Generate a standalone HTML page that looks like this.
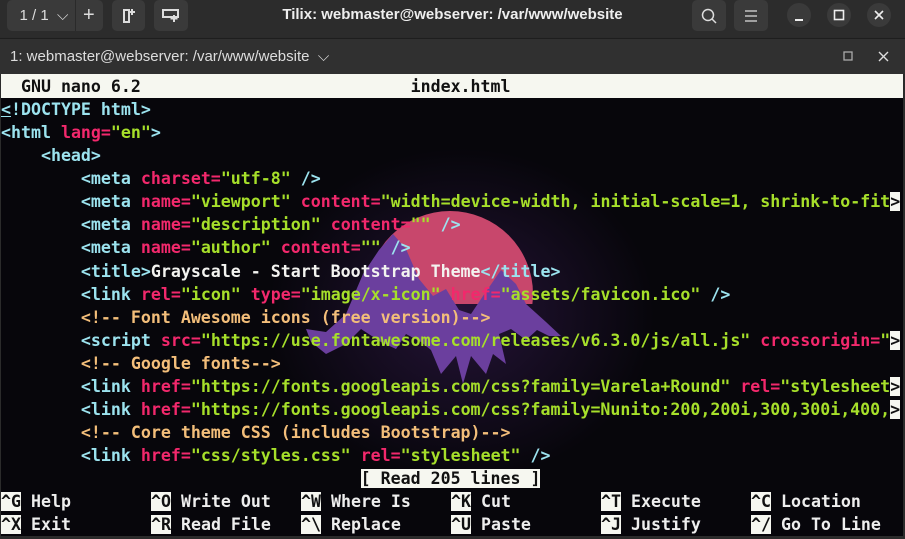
<!DOCTYPE html>
<html><head><style>
body{margin:0;width:905px;height:539px;background:#2b2b2b;overflow:hidden;font-family:"Liberation Sans",sans-serif;position:relative}
.tb{position:absolute;left:0;top:0;width:905px;height:37px;background:#2c2c2c}
.btn{position:absolute;top:0;height:31px;background:#3a3a3a;border-radius:5px;color:#ddd;font-size:15px;line-height:31px;text-align:center}
.title{position:absolute;left:0;width:905px;top:6px;text-align:center;color:#eee;font-weight:bold;font-size:15px}
.circ{position:absolute;top:3px;width:24px;height:24px;border-radius:50%;background:#3a3a3a}
.tab{position:absolute;left:0;top:38px;width:905px;height:35px;background:#303030;border-top:1px solid #1e1e1e}
.term{position:absolute;left:1px;top:74px;width:902px;height:462px;background:#07060b;overflow:hidden}
pre{margin:0;position:absolute;left:0;top:1px;font-family:"DejaVu Sans Mono","Liberation Mono",monospace;font-weight:bold;font-size:16.6px;line-height:23.07px;color:#eee}
.t{color:#9ce3ef}.a{color:#f2286c}.s{color:#a6df2a}.c{color:#f3be7a}.w{color:#f3f3f0}
.h{background:#f6f7f0;color:#111}
.k{display:inline-block;width:150px;white-space:pre}
</style></head><body>
<div class="tb">
 <div class="btn" style="left:7px;width:96px;text-align:left">&nbsp;&nbsp;&nbsp;1 / 1 &nbsp;⌵<span style="position:absolute;left:68px;top:0;width:1px;height:31px;background:#2a2a2a"></span><span style="position:absolute;left:76px;font-size:20px">+</span></div>
 <div class="btn" style="left:112px;width:33px"><svg width="14" height="16" viewBox="0 0 14 16" style="margin-top:8px"><path d="M2 2h5v12H2z" fill="none" stroke="#ddd" stroke-width="2"/><path d="M10 1v6M7 4h6" stroke="#ddd" stroke-width="2"/></svg></div>
 <div class="btn" style="left:154px;width:34px"><svg width="18" height="14" viewBox="0 0 18 14" style="margin-top:9px"><path d="M1 1h15v7H1z" fill="none" stroke="#ddd" stroke-width="2"/><path d="M12 6v7M8.5 9.5h7" stroke="#ddd" stroke-width="2"/></svg></div>
 <div class="title">Tilix: webmaster@webserver: /var/www/website</div>
 <div class="btn" style="left:692px;width:34px"><svg width="16" height="16" viewBox="0 0 16 16" style="margin-top:8px"><circle cx="7" cy="7" r="5.5" fill="none" stroke="#ddd" stroke-width="1.5"/><path d="M11 11l4 4" stroke="#ddd" stroke-width="1.5"/></svg></div>
 <div class="btn" style="left:734px;width:34px"><svg width="14" height="12" viewBox="0 0 14 12" style="margin-top:10px"><path d="M1 1h12M1 6h12M1 11h12" stroke="#ddd" stroke-width="1.3"/></svg></div>
 <div class="circ" style="left:787px"><svg width="24" height="24"><path d="M8 17h8" stroke="#eee" stroke-width="2"/></svg></div>
 <div class="circ" style="left:827px"><svg width="24" height="24"><rect x="7.5" y="7.5" width="9" height="9" fill="none" stroke="#eee" stroke-width="1.6"/></svg></div>
 <div class="circ" style="left:867px"><svg width="24" height="24"><path d="M8 8l8 8M16 8l-8 8" stroke="#eee" stroke-width="1.6"/></svg></div>
</div>
<div class="tab">
 <div style="position:absolute;left:10px;top:9px;color:#ddd;font-size:15px">1: webmaster@webserver: /var/www/website &nbsp;⌵</div>
 <svg style="position:absolute;left:843px;top:12px" width="12" height="12"><rect x="1" y="1" width="8" height="8" fill="none" stroke="#aaa" stroke-width="1.3"/></svg>
 <svg style="position:absolute;left:878px;top:12px" width="12" height="12"><path d="M1 1l9 9M10 1l-9 9" stroke="#ddd" stroke-width="1.4"/></svg>
</div>
<div class="term">
 <div style="position:absolute;left:250px;top:60px;width:420px;height:360px;background:radial-gradient(ellipse at center,rgba(60,30,90,0.55),rgba(7,6,11,0) 65%)"></div>
 <svg style="position:absolute;left:0;top:0" width="902" height="462">
  <defs><clipPath id="cp"><rect x="0" y="0" width="902" height="230"/></clipPath></defs>
  <circle cx="449" cy="220" r="83" fill="#c8476c" clip-path="url(#cp)"/>
  <path d="M305 255 L325 258 L345 240 L362 200 L378 176 L392 160 L405 175 L418 205 L432 222 L445 215 L458 236 L470 240 L482 222 L500 196 L515 210 L525 230 L545 248 L560 262 L548 262 L536 256 L525 266 L510 255 L498 260 L505 290 L492 280 L485 300 L470 282 L462 310 L455 282 L440 300 L430 276 L420 268 L405 260 L395 275 L380 268 L360 255 L345 270 L325 280 L310 268 Z" fill="#6b3f9e"/>
 </svg>
 <div class="h" style="position:absolute;left:0;top:0;width:902px;height:24px"></div>
<pre><span class="h">  GNU nano 6.2                           index.html                                        </span>
<span class="t" style="text-decoration:underline">&lt;</span><span class="t">!DOCTYPE html&gt;</span>
<span class="t">&lt;html </span><span class="a">lang=</span><span class="s">"en"</span><span class="t">&gt;</span>
<span class="t">    &lt;head&gt;</span>
<span class="t">        &lt;meta </span><span class="a">charset=</span><span class="s">"utf-8"</span><span class="t"> /&gt;</span>
<span class="t">        &lt;meta </span><span class="a">name=</span><span class="s">"viewport"</span> <span class="a">content=</span><span class="s">"width=device-width, initial-scale=1, shrink-to-fit</span><span class="h">&gt;</span>
<span class="t">        &lt;meta </span><span class="a">name=</span><span class="s">"description"</span> <span class="a">content=</span><span class="s">""</span><span class="t"> /&gt;</span>
<span class="t">        &lt;meta </span><span class="a">name=</span><span class="s">"author"</span> <span class="a">content=</span><span class="s">""</span><span class="t"> /&gt;</span>
<span class="t">        &lt;title&gt;</span><span class="w">Grayscale - Start Bootstrap Theme</span><span class="t">&lt;/title&gt;</span>
<span class="t">        &lt;link </span><span class="a">rel=</span><span class="s">"icon"</span> <span class="a">type=</span><span class="s">"image/x-icon"</span> <span class="a">href=</span><span class="s">"assets/favicon.ico"</span><span class="t"> /&gt;</span>
<span class="c">        &lt;!-- Font Awesome icons (free version)--&gt;</span>
<span class="t">        &lt;script </span><span class="a">src=</span><span class="s">"https://use.fontawesome.com/releases/v6.3.0/js/all.js"</span> <span class="a">crossorigin=</span><span class="s">"</span><span class="h">&gt;</span>
<span class="c">        &lt;!-- Google fonts--&gt;</span>
<span class="t">        &lt;link </span><span class="a">href=</span><span class="s">"https://fonts.googleapis.com/css?family=Varela+Round"</span> <span class="a">rel=</span><span class="s">"stylesheet</span><span class="h">&gt;</span>
<span class="t">        &lt;link </span><span class="a">href=</span><span class="s">"https://fonts.googleapis.com/css?family=Nunito:200,200i,300,300i,400,</span><span class="h">&gt;</span>
<span class="c">        &lt;!-- Core theme CSS (includes Bootstrap)--&gt;</span>
<span class="t">        &lt;link </span><span class="a">href=</span><span class="s">"css/styles.css"</span> <span class="a">rel=</span><span class="s">"stylesheet"</span><span class="t"> /&gt;</span>
                                    <span class="h">[ Read 205 lines ]</span>
<span class="k"><span class="h">^G</span> Help</span><span class="k"><span class="h">^O</span> Write Out</span><span class="k"><span class="h">^W</span> Where Is</span><span class="k"><span class="h">^K</span> Cut</span><span class="k"><span class="h">^T</span> Execute</span><span class="k"><span class="h">^C</span> Location</span>
<span class="k"><span class="h">^X</span> Exit</span><span class="k"><span class="h">^R</span> Read File</span><span class="k"><span class="h">^\</span> Replace</span><span class="k"><span class="h">^U</span> Paste</span><span class="k"><span class="h">^J</span> Justify</span><span class="k"><span class="h">^/</span> Go To Line</span></pre>
</div>
</body></html>
